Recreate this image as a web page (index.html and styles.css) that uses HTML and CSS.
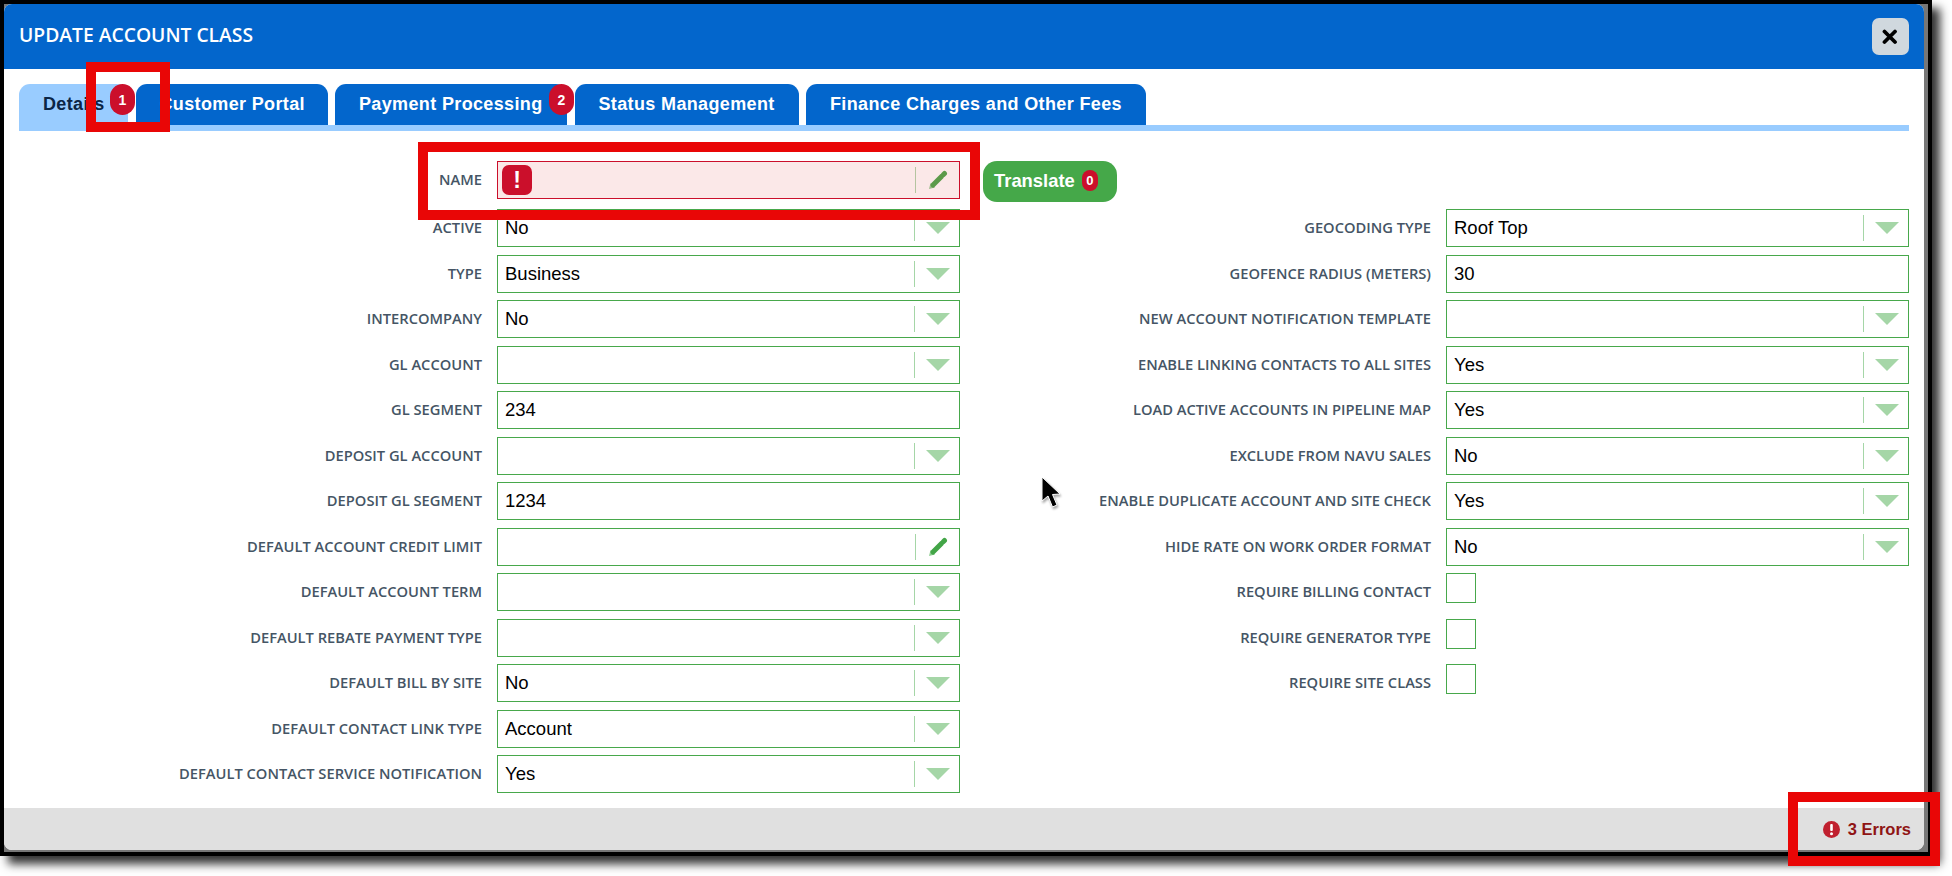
FILE: index.html
```html
<!DOCTYPE html>
<html lang="en">
<head>
    <meta charset="UTF-8">
    <title>Update Account Class</title>
    <link rel="stylesheet" href="styles.css">
</head>
<body>
<div class="screen">
    <div class="frame">
        <div class="dialog">
            <div class="dialog-header">
                <span class="dialog-title">UPDATE ACCOUNT CLASS</span>
                <button class="close-btn">
                    <svg width="16" height="16" viewBox="0 0 16 16"><path d="M2.500 2.500L13 13M13 2.500L2.500 13" stroke="#000" stroke-width="3.800" stroke-linecap="round"/></svg>
                </button>
            </div>

            <div class="tabs">
                <div class="tab active">Details<span class="tab-badge">1</span></div>
                <div class="tab">Customer Portal</div>
                <div class="tab">Payment Processing<span class="tab-badge">2</span></div>
                <div class="tab">Status Management</div>
                <div class="tab">Finance Charges and Other Fees</div>
            </div>

            <div class="dialog-body">
                <div class="name-row">
                    <label class="field-label">NAME</label>
                    <div class="control error">
                        <span class="error-flag">!</span>
                        <span class="value"></span>
                        <span class="divider"></span>
                        <svg class="pencil pencil-muted" width="20" height="20" viewBox="0 0 20 20"><path class="pencil-tip" d="M1 19L2.500 13L7 17.500Z"/><path class="pencil-body" d="M5 15L13.500 6.500"/><path class="pencil-body" d="M15.500 4.500L16.500 3.500"/></svg>
                    </div>
                    <button class="translate-btn">Translate<span class="translate-badge">0</span></button>
                </div>

                <div class="columns">
                    <div class="column">
                        <div class="row"><label class="field-label">ACTIVE</label><div class="control"><span class="value">No</span><span class="divider"></span><span class="arrow"></span></div></div>
                        <div class="row"><label class="field-label">TYPE</label><div class="control"><span class="value">Business</span><span class="divider"></span><span class="arrow"></span></div></div>
                        <div class="row"><label class="field-label">INTERCOMPANY</label><div class="control"><span class="value">No</span><span class="divider"></span><span class="arrow"></span></div></div>
                        <div class="row"><label class="field-label">GL ACCOUNT</label><div class="control"><span class="value"></span><span class="divider"></span><span class="arrow"></span></div></div>
                        <div class="row"><label class="field-label">GL SEGMENT</label><div class="control"><span class="value">234</span></div></div>
                        <div class="row"><label class="field-label">DEPOSIT GL ACCOUNT</label><div class="control"><span class="value"></span><span class="divider"></span><span class="arrow"></span></div></div>
                        <div class="row"><label class="field-label">DEPOSIT GL SEGMENT</label><div class="control"><span class="value">1234</span></div></div>
                        <div class="row"><label class="field-label">DEFAULT ACCOUNT CREDIT LIMIT</label><div class="control"><span class="value"></span><span class="divider"></span>
                            <svg class="pencil" width="20" height="20" viewBox="0 0 20 20"><path class="pencil-tip" d="M1 19L2.500 13L7 17.500Z"/><path class="pencil-body" d="M5 15L13.500 6.500"/><path class="pencil-body" d="M15.500 4.500L16.500 3.500"/></svg>
                        </div></div>
                        <div class="row"><label class="field-label">DEFAULT ACCOUNT TERM</label><div class="control"><span class="value"></span><span class="divider"></span><span class="arrow"></span></div></div>
                        <div class="row"><label class="field-label">DEFAULT REBATE PAYMENT TYPE</label><div class="control"><span class="value"></span><span class="divider"></span><span class="arrow"></span></div></div>
                        <div class="row"><label class="field-label">DEFAULT BILL BY SITE</label><div class="control"><span class="value">No</span><span class="divider"></span><span class="arrow"></span></div></div>
                        <div class="row"><label class="field-label">DEFAULT CONTACT LINK TYPE</label><div class="control"><span class="value">Account</span><span class="divider"></span><span class="arrow"></span></div></div>
                        <div class="row"><label class="field-label">DEFAULT CONTACT SERVICE NOTIFICATION</label><div class="control"><span class="value">Yes</span><span class="divider"></span><span class="arrow"></span></div></div>
                    </div>

                    <div class="column">
                        <div class="row"><label class="field-label">GEOCODING TYPE</label><div class="control"><span class="value">Roof Top</span><span class="divider"></span><span class="arrow"></span></div></div>
                        <div class="row"><label class="field-label">GEOFENCE RADIUS (METERS)</label><div class="control"><span class="value">30</span></div></div>
                        <div class="row"><label class="field-label">NEW ACCOUNT NOTIFICATION TEMPLATE</label><div class="control"><span class="value"></span><span class="divider"></span><span class="arrow"></span></div></div>
                        <div class="row"><label class="field-label">ENABLE LINKING CONTACTS TO ALL SITES</label><div class="control"><span class="value">Yes</span><span class="divider"></span><span class="arrow"></span></div></div>
                        <div class="row"><label class="field-label">LOAD ACTIVE ACCOUNTS IN PIPELINE MAP</label><div class="control"><span class="value">Yes</span><span class="divider"></span><span class="arrow"></span></div></div>
                        <div class="row"><label class="field-label">EXCLUDE FROM NAVU SALES</label><div class="control"><span class="value">No</span><span class="divider"></span><span class="arrow"></span></div></div>
                        <div class="row"><label class="field-label">ENABLE DUPLICATE ACCOUNT AND SITE CHECK</label><div class="control"><span class="value">Yes</span><span class="divider"></span><span class="arrow"></span></div></div>
                        <div class="row"><label class="field-label">HIDE RATE ON WORK ORDER FORMAT</label><div class="control"><span class="value">No</span><span class="divider"></span><span class="arrow"></span></div></div>
                        <div class="row"><label class="field-label">REQUIRE BILLING CONTACT</label><span class="checkbox"></span></div>
                        <div class="row"><label class="field-label">REQUIRE GENERATOR TYPE</label><span class="checkbox"></span></div>
                        <div class="row"><label class="field-label">REQUIRE SITE CLASS</label><span class="checkbox"></span></div>
                    </div>
                </div>
            </div>

            <div class="dialog-footer">
                <svg width="17" height="17" viewBox="0 0 17 17"><circle cx="8.500" cy="8.500" r="8.500" fill="#c0202f"/><rect x="7.200" y="3" width="2.600" height="7" rx="1" fill="#fff"/><circle cx="8.500" cy="12.800" r="1.500" fill="#fff"/></svg>
                <span class="error-count">3 Errors</span>
            </div>
        </div>
    </div>

    <!-- red callouts and pointer drawn on top of the capture -->
    <div class="callout callout-tab"></div>
    <div class="callout callout-name"></div>
    <div class="callout callout-errors"></div>
    <svg class="pointer" width="22" height="34" viewBox="0 0 22 34"><path d="M2 1L2 25L8 20L12.500 31L17 29L12.500 18.500L20 18Z" fill="#000" stroke="#fff" stroke-width="1"/></svg>
</div>
</body>
</html>
```

FILE: styles.css
```css
* {
    box-sizing: border-box;
}
html, body {
    margin: 0;
    background: white;
    overflow: hidden;
}
.screen {
    position: relative;
    width: 1952px;
    height: 876px;
}
.frame {
    width: 1932px;
    height: 856px;
    border: 4px solid #000;
    padding: 0 4px 2px 0;
    background: #777;
    box-shadow: 8px 8px 9px rgba(0, 0, 0, 0.8);
}
.dialog {
    display: flex;
    flex-direction: column;
    height: 100%;
    background: white;
    border-radius: 8px;
    overflow: hidden;
}
.dialog-header {
    display: flex;
    align-items: center;
    justify-content: space-between;
    flex: none;
    height: 65px;
    padding: 0 15px 0 15px;
    background: #0366cc;
}
.dialog-title {
    margin-bottom: 4px;
    color: white;
    font-family: "Open Sans", sans-serif;
    font-weight: 600;
    font-size: 19.300px;
}
.close-btn {
    display: flex;
    align-items: center;
    justify-content: center;
    width: 37px;
    height: 37px;
    padding: 0 1px 0 0;
    border: none;
    border-radius: 7px;
    background: #d0d8de;
}
.tabs {
    display: flex;
    flex: none;
    gap: 7.5px;
    height: 47px;
    margin: 15px 15px 0 15px;
    border-bottom: 6px solid #99ccff;
}
.tab {
    position: relative;
    display: flex;
    align-items: center;
    height: 41px;
    padding: 0 24px;
    border-radius: 11px 11px 0 0;
    background: #0366cc;
    color: white;
    font-family: "Liberation Sans", Arial, sans-serif;
    font-weight: bold;
    font-size: 18px;
    letter-spacing: 0.36px;
    white-space: nowrap;
}
.tab.active {
    height: 41px;
    background: #99ccff;
    color: #0b2545;
}
.tab-badge {
    position: absolute;
    top: 0;
    right: -7px;
    display: flex;
    align-items: center;
    justify-content: center;
    width: 25px;
    height: 31px;
    border-radius: 13px;
    background: #cb0f2b;
    color: white;
    font-size: 14px;
    letter-spacing: 0;
    z-index: 1;
}
.tab:nth-child(1) { width: 109px; }
.tab:nth-child(2) { width: 192px; }
.tab:nth-child(3) { width: 232px; }
.tab:nth-child(4) { width: 224px; }
.tab:nth-child(5) { width: 340px; }
.dialog-body {
    flex: 1;
    padding: 30px 15px 0 15px;
}
.name-row {
    display: flex;
    align-items: flex-start;
    height: 48px;
}
.name-row .field-label {
    height: 36px;
    margin-bottom: 0;
}
.columns {
    display: grid;
    grid-template-columns: 941px 941px;
    column-gap: 8px;
}
.column {
    display: flex;
    flex-direction: column;
    gap: 7.5px;
}
.row {
    display: flex;
    align-items: center;
    height: 38px;
}
.field-label {
    display: flex;
    align-items: center;
    justify-content: flex-end;
    flex: none;
    width: 463px;
    margin-right: 15px;
    margin-bottom: 2px;
    color: #455565;
    font-family: "Open Sans", sans-serif;
    font-weight: 600;
    font-size: 14.700px;
    white-space: nowrap;
}
.control {
    display: flex;
    align-items: center;
    flex: none;
    width: 463px;
    height: 38px;
    padding: 0 9px 0 7px;
    border: 1.5px solid #47a84b;
    background: white;
    font-family: "Liberation Sans", Arial, sans-serif;
    font-size: 18.500px;
    color: #000;
}
.control.error {
    padding-left: 4px;
    border: 1px solid #cb0f2b;
    background: #fbe8e8;
}
.value {
    flex: 1;
}
.divider {
    flex: none;
    width: 1px;
    height: 26px;
    margin-right: 11px;
    background: #a5d6a7;
}
.error .divider {
    background: #b5c4a0;
}
.arrow {
    flex: none;
    width: 0;
    height: 0;
    border-left: 12px solid transparent;
    border-right: 12px solid transparent;
    border-top: 12px solid #a5d6a7;
}
.pencil {
    flex: none;
    margin-left: 1px;
    margin-right: 2px;
}
.pencil-body {
    fill: none;
    stroke: #43a547;
    stroke-width: 5px;
    stroke-linecap: round;
}
.pencil-tip {
    fill: #8fce92;
}
.pencil-muted .pencil-body {
    stroke: #5c9a4a;
}
.pencil-muted .pencil-tip {
    fill: #9dbb8a;
}
.error-flag {
    display: flex;
    align-items: center;
    justify-content: center;
    flex: none;
    width: 30px;
    height: 30px;
    border-radius: 7px;
    background: #cb0f2b;
    color: white;
    font-weight: bold;
    font-size: 23px;
}
.translate-btn {
    display: flex;
    align-items: center;
    height: 41px;
    width: 134px;
    margin-left: 23px;
    padding: 0 0 2px 11px;
    border: none;
    border-radius: 14px;
    background: #45a849;
    color: white;
    font-family: "Liberation Sans", Arial, sans-serif;
    font-weight: bold;
    font-size: 18.400px;
}
.translate-badge {
    display: flex;
    align-items: center;
    justify-content: center;
    width: 16px;
    height: 21px;
    margin-left: 7px;
    border-radius: 8px;
    background: #cb0f2b;
    font-size: 13px;
}
.checkbox {
    align-self: flex-start;
    width: 30px;
    height: 30px;
    border: 1.5px solid #47a84b;
    background: white;
}
.dialog-footer {
    display: flex;
    align-items: center;
    justify-content: flex-end;
    gap: 8px;
    flex: none;
    height: 42px;
    padding: 0 13px 0 0;
    background: #e0e0e0;
}
.error-count {
    color: #8f1414;
    font-family: "Liberation Sans", Arial, sans-serif;
    font-weight: bold;
    font-size: 16.500px;
}
.callout {
    position: absolute;
    border: 10px solid #e90606;
}
.callout-tab {
    left: 86px;
    top: 62px;
    width: 84px;
    height: 70px;
}
.callout-name {
    left: 418px;
    top: 142px;
    width: 562px;
    height: 78px;
}
.callout-errors {
    left: 1788px;
    top: 792px;
    width: 152px;
    height: 74px;
}
.pointer {
    position: absolute;
    left: 1040px;
    top: 476px;
    filter: drop-shadow(1px 2px 1px rgba(0, 0, 0, 0.35));
}
```
